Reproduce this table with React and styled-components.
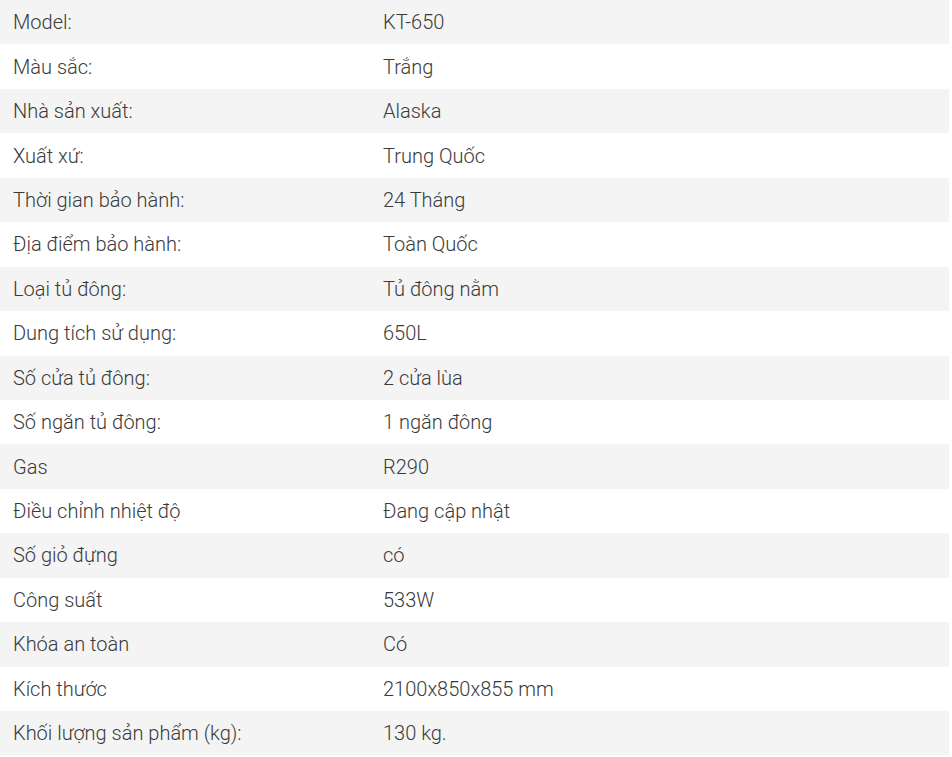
import React from 'react';
import styled, { createGlobalStyle } from 'styled-components';

const GlobalStyle = createGlobalStyle`
  html, body {
    margin: 0;
    padding: 0;
    background: #fff;
  }
`;

const Table = styled.div`
  width: 949px;
  display: flex;
  flex-direction: column;
  font-family: Roboto, "Liberation Sans", sans-serif;
  font-weight: 300;
  font-size: 20px;
  color: #3a3a3a;
`;

const Row = styled.div`
  display: grid;
  grid-template-columns: 370px 1fr;
  height: 44.45px;
  align-items: center;
  background: ${(props) => (props.$striped ? '#f4f4f4' : '#fff')};
`;

const Cell = styled.div`
  padding: 0 13px;
  white-space: nowrap;
`;

const specs = [
  ['Model:', 'KT-650'],
  ['Màu sắc:', 'Trắng'],
  ['Nhà sản xuất:', 'Alaska'],
  ['Xuất xứ:', 'Trung Quốc'],
  ['Thời gian bảo hành:', '24 Tháng'],
  ['Địa điểm bảo hành:', 'Toàn Quốc'],
  ['Loại tủ đông:', 'Tủ đông nằm'],
  ['Dung tích sử dụng:', '650L'],
  ['Số cửa tủ đông:', '2 cửa lùa'],
  ['Số ngăn tủ đông:', '1 ngăn đông'],
  ['Gas', 'R290'],
  ['Điều chỉnh nhiệt độ', 'Đang cập nhật'],
  ['Số giỏ đựng', 'có'],
  ['Công suất', '533W'],
  ['Khóa an toàn', 'Có'],
  ['Kích thước', '2100x850x855 mm'],
  ['Khối lượng sản phẩm (kg):', '130 kg.'],
];

const App = () => (
  <>
    <GlobalStyle />
    <Table>
      {specs.map(([label, value], i) => (
        <Row key={label} $striped={i % 2 === 0}>
          <Cell>{label}</Cell>
          <Cell>{value}</Cell>
        </Row>
      ))}
    </Table>
  </>
);

export default App;
